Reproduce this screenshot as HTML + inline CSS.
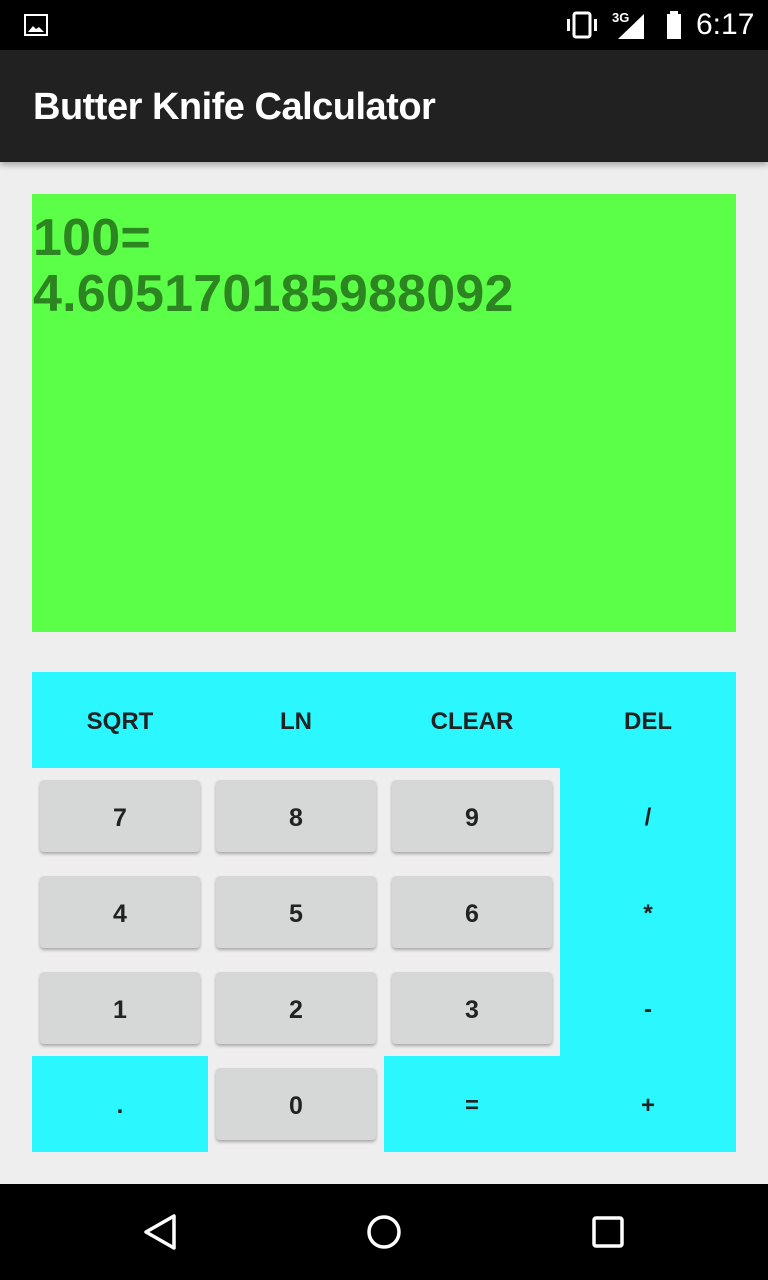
<!DOCTYPE html>
<html><head><style>
*{margin:0;padding:0;box-sizing:border-box}
body{width:768px;height:1280px;background:#eeeeee;font-family:"Liberation Sans",sans-serif;position:relative;overflow:hidden}
.abs{position:absolute}
.sb{left:0;top:0;width:768px;height:50px;background:#000}
.ab{left:0;top:50px;width:768px;height:112px;background:#212121;box-shadow:0 3px 6px rgba(0,0,0,.3)}
.ab span{position:absolute;left:33px;top:36px;color:#fff;font-size:38px;font-weight:bold;letter-spacing:-0.5px}
.disp{left:32px;top:194px;width:704px;height:438px;background:#5cff47;color:#2c8520;font-weight:bold;font-size:52px;line-height:56px;padding:16px 0 0 1px;letter-spacing:0.2px}
.c{background:#2af7ff;display:flex;align-items:center;justify-content:center;font-size:24px;font-weight:bold;color:#222;padding-top:4px}
.b{background:#d6d7d7;border-radius:4px;box-shadow:0 2px 3px rgba(0,0,0,.3);display:flex;align-items:center;justify-content:center;font-size:25px;font-weight:bold;color:#222;padding-top:4px}
.nav{left:0;top:1184px;width:768px;height:96px;background:#000}
</style></head><body>
<div class="abs sb">
<svg class="abs" style="left:24px;top:14px" width="24" height="22"><rect x="1" y="1" width="22" height="20" fill="none" stroke="#fff" stroke-width="2"/><path d="M4 18 L9 12 L12 15 L15 13 L20 18Z" fill="#fff"/></svg>
<svg class="abs" style="left:564px;top:10px" width="40" height="30"><rect x="10" y="3" width="16" height="24" rx="2" fill="none" stroke="#fff" stroke-width="3"/><rect x="3" y="9" width="3" height="12" fill="#fff"/><rect x="30" y="9" width="3" height="12" fill="#fff"/></svg>
<span class="abs" style="left:612px;top:10px;color:#fff;font-size:13px;font-weight:bold">3G</span>
<svg class="abs" style="left:616px;top:12px" width="30" height="28"><path d="M28 2 L28 27 L2 27Z" fill="#fff"/></svg>
<svg class="abs" style="left:664px;top:10px" width="20" height="30"><rect x="3" y="4" width="14" height="25" fill="#fff"/><rect x="6" y="1" width="8" height="4" fill="#fff"/></svg>
<span class="abs" style="left:696px;top:8px;color:#fff;font-size:30px">6:17</span>
</div>
<div class="abs ab"><span>Butter Knife Calculator</span></div>
<div class="abs disp">100=<br>4.605170185988092</div>
<div class="abs c" style="left:32px;top:672px;width:704px;height:96px"></div>
<div class="abs c" style="left:32px;top:672px;width:176px;height:96px">SQRT</div>
<div class="abs c" style="left:208px;top:672px;width:176px;height:96px">LN</div>
<div class="abs c" style="left:384px;top:672px;width:176px;height:96px">CLEAR</div>
<div class="abs c" style="left:560px;top:672px;width:176px;height:96px">DEL</div>
<div class="abs c" style="left:560px;top:768px;width:176px;height:96px">/</div>
<div class="abs c" style="left:560px;top:864px;width:176px;height:96px">*</div>
<div class="abs c" style="left:560px;top:960px;width:176px;height:96px">-</div>
<div class="abs c" style="left:560px;top:1056px;width:176px;height:96px">+</div>
<div class="abs c" style="left:32px;top:1056px;width:176px;height:96px">.</div>
<div class="abs c" style="left:384px;top:1056px;width:176px;height:96px">=</div>
<div class="abs b" style="left:40px;top:780px;width:160px;height:72px">7</div>
<div class="abs b" style="left:216px;top:780px;width:160px;height:72px">8</div>
<div class="abs b" style="left:392px;top:780px;width:160px;height:72px">9</div>
<div class="abs b" style="left:40px;top:876px;width:160px;height:72px">4</div>
<div class="abs b" style="left:216px;top:876px;width:160px;height:72px">5</div>
<div class="abs b" style="left:392px;top:876px;width:160px;height:72px">6</div>
<div class="abs b" style="left:40px;top:972px;width:160px;height:72px">1</div>
<div class="abs b" style="left:216px;top:972px;width:160px;height:72px">2</div>
<div class="abs b" style="left:392px;top:972px;width:160px;height:72px">3</div>
<div class="abs b" style="left:216px;top:1068px;width:160px;height:72px">0</div>
<div class="abs nav">
<svg class="abs" style="left:140px;top:28px" width="40" height="40"><path d="M34 4 L34 36 L6 20Z" fill="none" stroke="#fff" stroke-width="3.5" stroke-linejoin="round"/></svg>
<svg class="abs" style="left:364px;top:28px" width="40" height="40"><circle cx="20" cy="20" r="15" fill="none" stroke="#fff" stroke-width="3.5"/></svg>
<svg class="abs" style="left:590px;top:30px" width="36" height="36"><rect x="4" y="4" width="28" height="28" rx="2" fill="none" stroke="#fff" stroke-width="3.5"/></svg>
</div>
</body></html>
